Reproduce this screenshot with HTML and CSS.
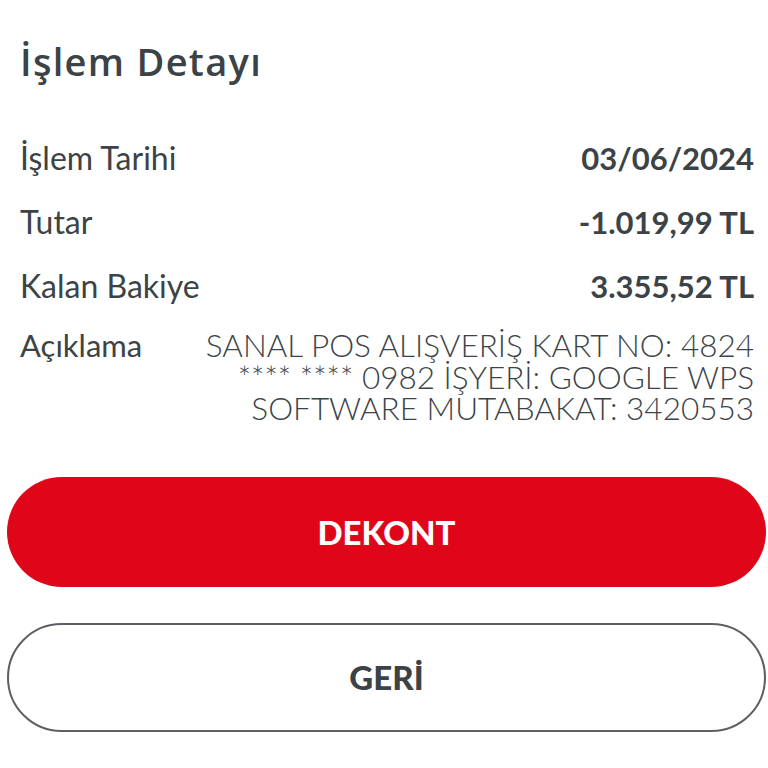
FILE: index.html
```html
<!DOCTYPE html>
<html lang="tr">
<head>
<meta charset="utf-8">
<link rel="stylesheet" href="styles.css">
</head>
<body>
<main class="page">
  <h1 class="title">İşlem Detayı</h1>
  <div class="rows">
    <div class="row"><span class="label">İşlem Tarihi</span><span class="value">03/06/2024</span></div>
    <div class="row"><span class="label">Tutar</span><span class="value">-1.019,99 TL</span></div>
    <div class="row"><span class="label">Kalan Bakiye</span><span class="value">3.355,52 TL</span></div>
    <div class="row desc-row"><span class="label">Açıklama</span><span class="desc">SANAL POS ALIŞVERİŞ KART NO: 4824<br>**** **** 0982 İŞYERİ: GOOGLE WPS<br>SOFTWARE MUTABAKAT: 3420553</span></div>
  </div>
  <div class="buttons">
    <button class="btn btn-primary">DEKONT</button>
    <button class="btn btn-secondary">GERİ</button>
  </div>
</main>
</body>
</html>
```
FILE: styles.css
```css
html, body { margin: 0; padding: 0; background: #ffffff; }
body { font-family: Lato, "Open Sans", sans-serif; color: #3c4347; }
.page { padding: 33px 2px 0 7px; }
.title { margin: 0 0 0 13px; font-family: "Open Sans", sans-serif; font-size: 38px; font-weight: 600; line-height: 56px; letter-spacing: 1.3px; }
.rows { margin: 47px 12px 0 13px; display: flex; flex-direction: column; gap: 20px; }
.row { display: flex; justify-content: space-between; align-items: flex-start; font-size: 32px; line-height: 44px; }
.label { font-weight: 400; }
.value { font-weight: 700; font-size: 31px; }
.desc-row { line-height: 31.5px; margin-top: 2px; }
.desc-row .label { font-size: 31px; }
.desc { text-align: right; font-weight: 300; font-size: 31.5px; }
.buttons { margin-top: 52px; display: flex; flex-direction: column; gap: 36px; }
.btn { width: 759px; border-radius: 56px; font-family: Lato, sans-serif; font-size: 33px; font-weight: 900; cursor: pointer; padding: 0; }
.btn-primary { height: 110px; background: #e0061a; color: #ffffff; border: none; }
.btn-secondary { height: 109px; background: #ffffff; color: #3c4347; border: 2px solid #5c6064; }
```
